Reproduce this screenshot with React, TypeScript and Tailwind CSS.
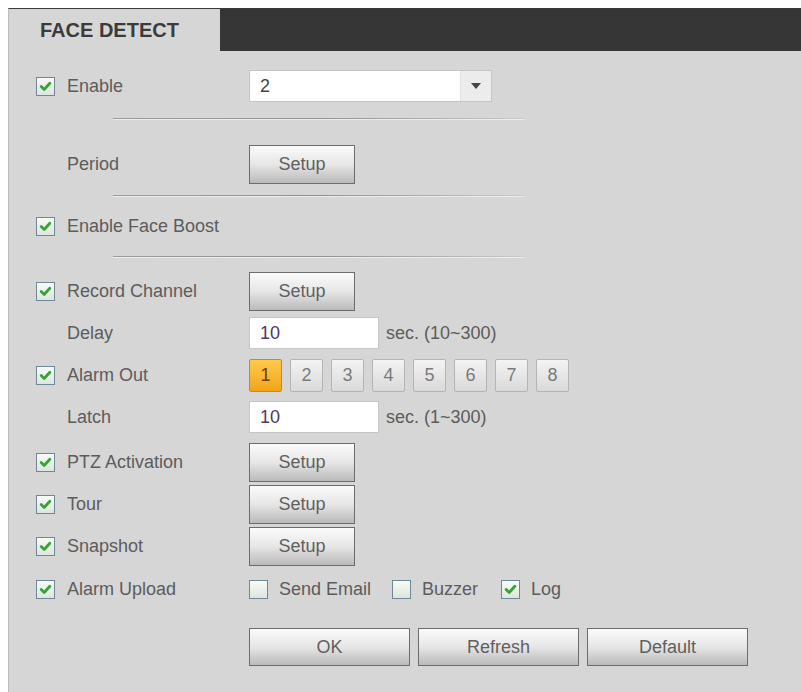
import React from 'react';

const font = { fontFamily: '"Liberation Sans", Arial, sans-serif' };

function Check({ checked }: { checked: boolean }) {
  return (
    <span className="flex h-[19px] w-[19px] shrink-0 items-center justify-center border border-[#6f8796] bg-linear-to-b from-[#f7fbf7] to-[#dde6de]">
      {checked && (
        <svg viewBox="0 0 12 12" className="h-[13px] w-[13px]">
          <path d="M2 6 L4.8 8.8 L10 3" fill="none" stroke="#38a238" strokeWidth="2.6" strokeLinecap="round" strokeLinejoin="round" />
        </svg>
      )}
    </span>
  );
}

function SetupButton({ label = 'Setup', className = 'w-[106px] h-[39px]' }: { label?: string; className?: string }) {
  return (
    <button className={`${className} border border-[#6c6c6c] bg-linear-to-b from-[#fbfbfb] via-[#e6e6e6] to-[#bababa] text-[18px] text-[#606060]`}>
      {label}
    </button>
  );
}

function Row({
  label,
  checked,
  children,
  className = 'h-[42px]',
}: {
  label: string;
  checked?: boolean;
  children?: React.ReactNode;
  className?: string;
}) {
  return (
    <div className={`flex items-center ${className}`}>
      <div className="flex w-[213px] items-center gap-[12px]">
        {checked === undefined ? <span className="w-[19px]" /> : <Check checked={checked} />}
        <span className="text-[18px] text-[#5c5c5c]">{label}</span>
      </div>
      {children}
    </div>
  );
}

function TextBox({ value }: { value: string }) {
  return (
    <div className="flex h-[32px] w-[130px] items-center border border-[#c6c6c6] bg-white pl-[10px] text-[18px] text-[#4b3a62]">
      {value}
    </div>
  );
}

function Separator({ className }: { className: string }) {
  return (
    <div className={`ml-[77px] w-[412px] ${className}`}>
      <div className="h-px bg-linear-to-r from-[#9c9c9c] via-[#929292] to-[#cacaca]" />
      <div className="h-px bg-[#ececec]" />
    </div>
  );
}

export default function App() {
  const alarmOuts = [1, 2, 3, 4, 5, 6, 7, 8];

  return (
    <div className="h-[692px] w-[801px] bg-white pl-2 pt-2" style={font}>
      <div className="flex h-full flex-col border-l border-t border-[#3a3a3a] border-l-[#bdbdbd] bg-[#d6d6d6]">
        {/* Tab header */}
        <div className="flex h-[42px] shrink-0">
          <div className="flex w-[211px] items-center pl-[31px] text-[20px] font-bold text-[#3b3b3b]">
            FACE DETECT
          </div>
          <div className="flex-1 bg-[#363636]" />
        </div>

        <div className="pl-[27px]">
          <Row label="Enable" checked className="mt-[19px] h-[32px]">
            <div className="flex h-[32px] w-[243px] border border-[#c4c4c4] bg-white">
              <div className="flex flex-1 items-center pl-[10px] text-[18px] text-[#444]">2</div>
              <div className="flex w-[31px] items-center justify-center border-l border-[#e2e2e2] bg-[#ececec]">
                <svg viewBox="0 0 10 6" className="h-[6px] w-[10px]">
                  <path d="M0 0 H10 L5 6 Z" fill="#444" />
                </svg>
              </div>
            </div>
          </Row>

          <Separator className="mt-[16px]" />

          <Row label="Period" className="mt-[24px] h-[40px]">
            <SetupButton />
          </Row>

          <Separator className="mt-[11px]" />

          <Row label="Enable Face Boost" checked className="mt-[14px] h-[30px]" />

          <Separator className="mt-[15px]" />

          <Row label="Record Channel" checked className="mt-[12px] h-[42px]">
            <SetupButton />
          </Row>
          <Row label="Delay">
            <TextBox value="10" />
            <span className="ml-[7px] text-[18px] text-[#5c5c5c]">sec. (10~300)</span>
          </Row>
          <Row label="Alarm Out" checked>
            <div className="flex gap-[8px]">
              {alarmOuts.map((n) =>
                n === 1 ? (
                  <div
                    key={n}
                    className="flex h-[33px] w-[33px] items-center justify-center rounded-[2px] border border-[#c48a1e] bg-linear-to-b from-[#ffc94a] to-[#f2a514] text-[18px] text-[#6a3f00]"
                  >
                    {n}
                  </div>
                ) : (
                  <div
                    key={n}
                    className="flex h-[33px] w-[33px] items-center justify-center rounded-[2px] border border-[#b4b4b4] bg-linear-to-b from-[#f4f4f4] to-[#d9d9d9] text-[18px] text-[#7a7a7a]"
                  >
                    {n}
                  </div>
                )
              )}
            </div>
          </Row>
          <Row label="Latch">
            <TextBox value="10" />
            <span className="ml-[7px] text-[18px] text-[#5c5c5c]">sec. (1~300)</span>
          </Row>
          <Row label="PTZ Activation" checked className="mt-[3px] h-[42px]">
            <SetupButton />
          </Row>
          <Row label="Tour" checked>
            <SetupButton />
          </Row>
          <Row label="Snapshot" checked>
            <SetupButton />
          </Row>
          <Row label="Alarm Upload" checked className="mt-px h-[42px]">
            <div className="flex items-center text-[18px] text-[#5c5c5c]">
              <Check checked={false} />
              <span className="ml-[11px]">Send Email</span>
              <span className="ml-[21px]">
                <Check checked={false} />
              </span>
              <span className="ml-[11px]">Buzzer</span>
              <span className="ml-[23px]">
                <Check checked />
              </span>
              <span className="ml-[11px]">Log</span>
            </div>
          </Row>

          <div className="mt-[18px] flex gap-[8px] pl-[213px]">
            <SetupButton label="OK" className="h-[38px] w-[161px]" />
            <SetupButton label="Refresh" className="h-[38px] w-[161px]" />
            <SetupButton label="Default" className="h-[38px] w-[161px]" />
          </div>
        </div>
      </div>
    </div>
  );
}
